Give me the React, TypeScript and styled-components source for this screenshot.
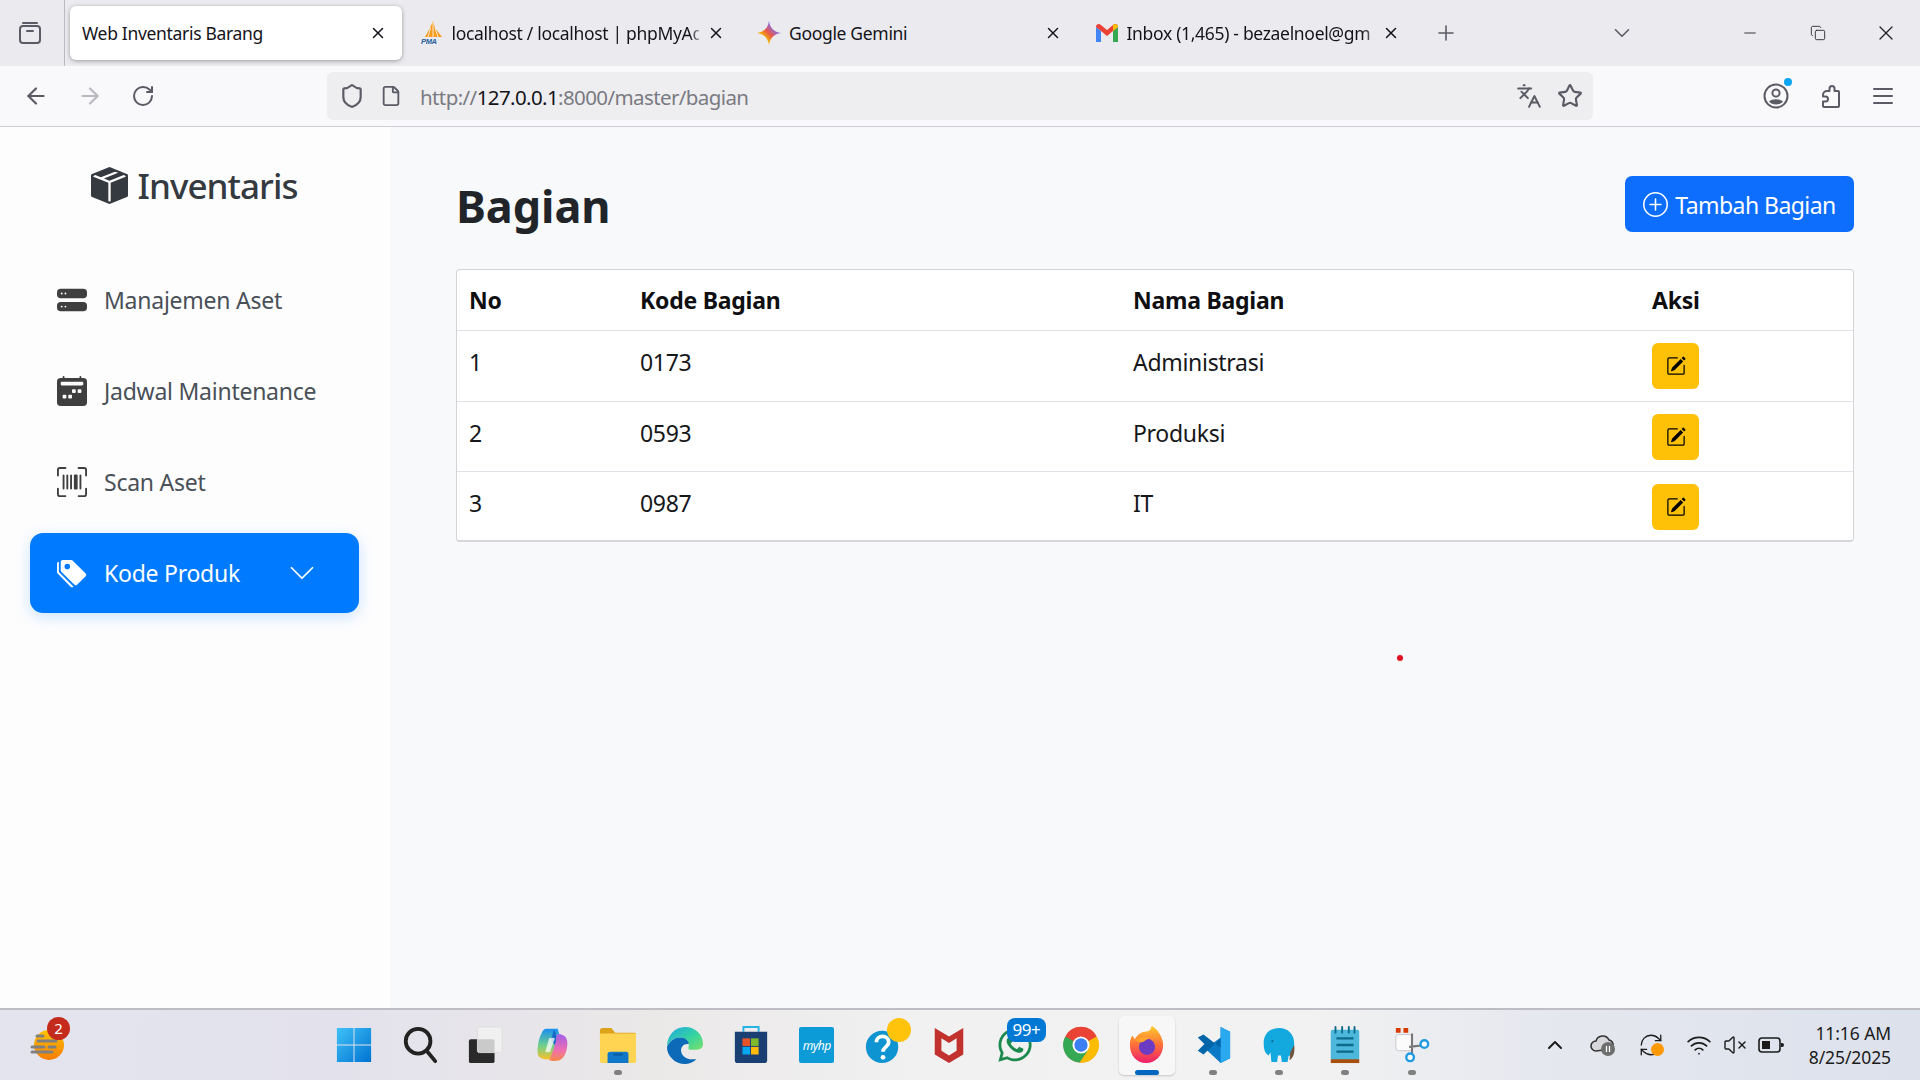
import React from "react";
import styled, { createGlobalStyle } from "styled-components";
import {
  ArrowLeft,
  ArrowRight,
  RotateCw,
  Shield,
  File,
  Star,
  Languages,
  X,
  Plus,
  ChevronDown,
  ChevronUp,
  Minus,
  Copy,
  VolumeX,
  Wifi,
  RefreshCw,
} from "lucide-react";
import {
  BsBoxSeamFill,
  BsHddStackFill,
  BsCalendar2WeekFill,
  BsUpcScan,
  BsTagsFill,
  BsChevronDown,
  BsPlusCircle,
  BsPencilSquare,
} from "react-icons/bs";
import { FaWhatsapp } from "react-icons/fa";

const FONT = `"Noto Sans", "Open Sans", "Liberation Sans", sans-serif`;

const GlobalStyle = createGlobalStyle`
  html, body {
    margin: 0;
    padding: 0;
    width: 1920px;
    height: 1080px;
    overflow: hidden;
    font-family: ${FONT};
    background: #f8f9fa;
  }
  * { box-sizing: border-box; }
`;

const Screen = styled.div`
  position: relative;
  width: 1920px;
  height: 1080px;
  display: flex;
  flex-direction: column;
`;

/* browser tab strip */
const TabStrip = styled.div`
  height: 66px;
  flex: none;
  display: flex;
  align-items: flex-start;
  background: #ebebef;
  color: #15141a;
`;

const TabListSlot = styled.div`
  width: 65px;
  height: 66px;
  flex: none;
  padding-right: 5px;
  display: flex;
  align-items: center;
  justify-content: center;
  border-right: 1px solid #b9b9bf;
  margin-right: 5px;
`;

const Tab = styled.div<{ $active?: boolean }>`
  width: 332px;
  height: 54px;
  margin: 6px 5.5px 0 0;
  flex: none;
  display: flex;
  align-items: center;
  padding: 0 15px 0 12px;
  border-radius: 6px;
  gap: 8px;
  font-size: 17.5px;
  letter-spacing: -0.32px;
  background: ${(p) => (p.$active ? "#ffffff" : "transparent")};
  box-shadow: ${(p) => (p.$active ? "0 1px 4px rgba(0,0,0,.35)" : "none")};
`;

const TabTitle = styled.span<{ $fade?: boolean }>`
  flex: 1;
  min-width: 0;
  white-space: nowrap;
  ${(p) =>
    p.$fade &&
    `-webkit-mask-image: linear-gradient(90deg,#000 96%,rgba(0,0,0,.4));mask-image: linear-gradient(90deg,#000 96%,rgba(0,0,0,.4));`}
`;

const TabFavicon = styled.svg`
  width: 24px;
  height: 24px;
  flex: none;
`;

const StripControls = styled.div`
  flex: 1;
  height: 66px;
  display: flex;
  align-items: center;
  color: #5b5b66;
`;

const PlusSlot = styled.div`
  width: 60px;
  margin-left: -4px;
  display: flex;
  justify-content: center;
`;

const ChevronSlot = styled.div`
  margin-left: 131px;
  width: 30px;
  display: flex;
  justify-content: center;
`;

const WindowButtons = styled.div`
  margin-left: auto;
  display: flex;
  align-items: center;
  color: #222;
`;

const WindowButton = styled.div`
  width: 68px;
  display: flex;
  justify-content: center;
`;

/* browser toolbar */
const Toolbar = styled.div`
  height: 61px;
  flex: none;
  display: flex;
  align-items: center;
  background: #f9f9fb;
  border-bottom: 1px solid #cfcfd8;
  color: #5b5b66;
  padding-left: 13px;
`;

const NavButton = styled.div<{ $dim?: boolean }>`
  width: 54px;
  display: flex;
  justify-content: flex-start;
  padding-left: 10px;
  opacity: ${(p) => (p.$dim ? 0.4 : 1)};
`;

const UrlBar = styled.div`
  width: 1266px;
  height: 48px;
  margin-left: 152px;
  border-radius: 6px;
  background: #eeeef0;
  display: flex;
  align-items: center;
  padding: 0 10px 0 12px;
  gap: 15px;
`;

const UrlText = styled.div`
  flex: 1;
  font-size: 20.5px;
  letter-spacing: -0.6px;
  color: #7a7a82;
  white-space: nowrap;
  margin: 1px 0 0 3px;
  b {
    font-weight: 400;
    color: #15141a;
  }
`;

const ToolbarRight = styled.div`
  margin-left: auto;
  display: flex;
  align-items: center;
  gap: 28px;
  padding-right: 24px;
`;

const AccountIcon = styled.div`
  position: relative;
  width: 26px;
  height: 26px;
  margin-right: -1px;
  &::after {
    content: "";
    position: absolute;
    top: -5px;
    right: -3px;
    width: 8px;
    height: 8px;
    border-radius: 50%;
    background: #0aa5f5;
  }
`;

/* page */
const Body = styled.div`
  flex: 1;
  min-height: 0;
  display: flex;
`;

const Sidebar = styled.aside`
  width: 390px;
  flex: none;
  background: #fdfdfe;
  padding: 33px 31px 0 30px;
  color: #3a3a3a;
`;

const Brand = styled.div`
  display: flex;
  align-items: center;
  justify-content: center;
  gap: 9px;
  height: 50px;
  font-size: 35px;
  font-weight: 500;
  letter-spacing: -0.95px;
  color: #343a40;
  margin-bottom: 50px;
  svg {
    width: 37px;
    height: 37px;
  }
`;

const NavList = styled.nav`
  display: flex;
  flex-direction: column;
  gap: 11px;
`;

const NavItem = styled.div<{ $active?: boolean }>`
  height: 80px;
  border-radius: 13px;
  display: flex;
  align-items: center;
  padding-left: 27px;
  gap: 17px;
  font-size: 23px;
  letter-spacing: -0.25px;
  color: ${(p) => (p.$active ? "#fff" : "#495057")};
  background: ${(p) => (p.$active ? "#007bff" : "transparent")};
  box-shadow: ${(p) => (p.$active ? "0 4px 15px rgba(0,123,255,.2)" : "none")};
  > svg:first-child {
    width: 30px;
    height: 30px;
    flex: none;
    color: ${(p) => (p.$active ? "#fff" : "#3f3f3f")};
  }
`;

const NavCaret = styled.span`
  margin-left: 31px;
  display: flex;
  svg {
    width: 28px;
    height: 28px;
  }
`;

const Main = styled.main`
  position: relative;
  flex: 1;
  background: #f8f9fa;
  padding: 49px 66px 0 66px;
`;

const PageHeader = styled.div`
  display: flex;
  justify-content: space-between;
  align-items: flex-start;
  margin-bottom: 37px;
`;

const PageTitle = styled.h1`
  margin: 0;
  font-size: 45px;
  line-height: 60px;
  font-weight: 700;
  letter-spacing: -0.1px;
  color: #212529;
  height: 56px;
`;

const AddButton = styled.button`
  height: 56px;
  width: 229px;
  border: 0;
  border-radius: 7px;
  background: #0d6efd;
  color: #fff;
  display: flex;
  align-items: center;
  justify-content: center;
  gap: 7px;
  padding: 1px 0 0;
  font-family: inherit;
  font-size: 23px;
  letter-spacing: -0.55px;
  svg {
    width: 25px;
    height: 25px;
  }
`;

const TableCard = styled.div`
  background: #fff;
  border: 1px solid #d4d4d6;
  border-bottom: 2px solid #d6d6da;
  border-radius: 4px;
  overflow: hidden;
`;

const DataTable = styled.table`
  width: 100%;
  border-collapse: collapse;
  table-layout: fixed;
  font-size: 23px;
  color: #212529;
  tbody tr:nth-child(1) td {
    height: 71px;
  }
  tbody tr:nth-child(2) td {
    height: 70px;
  }
  tbody tr:nth-child(3) td {
    height: 69px;
  }
`;

const Th = styled.th<{ $w?: number }>`
  width: ${(p) => (p.$w ? `${p.$w}px` : "auto")};
  height: 60px;
  text-align: left;
  font-weight: 700;
  padding: 1px 12px 0;
  letter-spacing: -0.25px;
  color: #0f0f12;
  border-bottom: 1px solid #dee2e6;
`;

const Td = styled.td<{ $action?: boolean }>`
  padding: ${(p) => (p.$action ? "12px" : "16px")} 12px 0;
  vertical-align: top;
  letter-spacing: -0.3px;
  line-height: 30px;
  border-top: 1px solid #dee2e6;
  color: #15171a;
`;

const EditButton = styled.button`
  width: 47px;
  height: 46px;
  border: 0;
  border-radius: 6px;
  background: #ffc107;
  color: #000;
  display: flex;
  align-items: center;
  justify-content: center;
  svg {
    width: 20px;
    height: 20px;
  }
`;

const Dot = styled.div`
  position: absolute;
  left: 1007px;
  top: 528px;
  width: 6px;
  height: 6px;
  border-radius: 50%;
  background: #e01020;
`;

/* windows taskbar */
const Taskbar = styled.footer`
  height: 72px;
  flex: none;
  display: flex;
  align-items: center;
  border-top: 2px solid #bdbdc3;
  background: linear-gradient(
    90deg,
    #e3e4ee 0%,
    #e3e2ec 18%,
    #ebe8e8 34%,
    #f1f1f1 48%,
    #f2f2f2 68%,
    #e6e8ef 80%,
    #dce1ec 100%
  );
`;

const WeatherSlot = styled.div`
  position: relative;
  width: 321px;
  flex: none;
  padding-left: 29px;
  display: flex;
  align-items: center;
`;

const CountBadge = styled.span`
  position: absolute;
  left: 47px;
  top: -10px;
  width: 23px;
  height: 23px;
  border-radius: 50%;
  background: #c42b1c;
  color: #fff;
  font-size: 15px;
  line-height: 23px;
  text-align: center;
`;

const IconGroup = styled.div`
  display: flex;
  align-items: center;
`;

const Slot = styled.div<{ $active?: boolean }>`
  position: relative;
  width: 66.1px;
  height: 70px;
  display: flex;
  align-items: center;
  justify-content: center;
  svg.tile {
    width: 38px;
    height: 38px;
  }
  ${(p) =>
    p.$active &&
    `&::before {
      content: "";
      position: absolute;
      inset: 6px 5px 5px;
      border-radius: 5px;
      background: #f7f7f7;
      box-shadow: 0 1px 2px rgba(0,0,0,.18);
    }
    > * { position: relative; }`}
`;

const RunDot = styled.span<{ $active?: boolean }>`
  position: absolute !important;
  bottom: 5px;
  left: 50%;
  transform: translateX(-50%);
  width: ${(p) => (p.$active ? 24 : 8)}px;
  height: 5px;
  border-radius: 3px;
  background: ${(p) => (p.$active ? "#0067c0" : "#808080")};
`;

const YellowDot = styled.span`
  position: absolute;
  top: 8px;
  left: 37px;
  width: 24px;
  height: 24px;
  border-radius: 50%;
  background: #ffc30b;
`;

const ChatBadge = styled.span`
  position: absolute;
  top: 8px;
  left: 25px;
  width: 39px;
  height: 24px;
  border-radius: 8px;
  background: #0078d4;
  color: #fff;
  font-size: 17px;
  line-height: 24px;
  text-align: center;
  letter-spacing: -0.5px;
`;

const Tray = styled.div`
  margin-left: auto;
  display: flex;
  align-items: center;
  color: #1c1c1c;
  padding-right: 29px;
`;

const TrayIcon = styled.div<{ $w: number }>`
  position: relative;
  width: ${(p) => p.$w}px;
  display: flex;
  justify-content: center;
`;

const TrayClock = styled.div`
  margin-left: 14px;
  text-align: right;
  font-size: 17.5px;
  line-height: 24px;
  color: #1b1b1b;
  letter-spacing: -0.1px;
`;

const OrangeDot = styled.span`
  position: absolute;
  left: 24px;
  top: 11px;
  width: 13px;
  height: 13px;
  border-radius: 50%;
  background: #ff9a05;
`;

/* drawings */
const TabsIcon = () => (
  <svg width="24" height="24" viewBox="0 0 24 24" fill="none" stroke="#5b5b66" strokeWidth="2">
    <rect x="2" y="5" width="20" height="17" rx="3" />
    <path d="M5 2h14M9 10h6" strokeLinecap="round" />
  </svg>
);

const PmaIcon = () => (
  <TabFavicon viewBox="0 0 24 24">
    <path d="M13 0l2 7 7 9H5l5-9z" fill="#f59b1e" />
    <path d="M13 1v15M10.5 7L8 16M15 7l3 9" stroke="#fff" strokeWidth=".8" />
    <text x="1" y="23" fontFamily="Liberation Sans, sans-serif" fontSize="7.5" fontWeight="700" fontStyle="italic" fill="#2a5d9c">
      PMA
    </text>
  </TabFavicon>
);

const GeminiIcon = () => (
  <TabFavicon viewBox="0 0 24 24">
    <defs>
      <linearGradient id="gem1" x1="0" y1="1" x2="1" y2="0">
        <stop offset="0" stopColor="#34a853" />
        <stop offset=".3" stopColor="#f4b400" />
        <stop offset=".5" stopColor="#e9584c" />
        <stop offset=".7" stopColor="#8e6bd8" />
        <stop offset="1" stopColor="#2f8cf2" />
      </linearGradient>
    </defs>
    <path d="M12 0c1 7 5 11 12 12-7 1-11 5-12 12-1-7-5-11-12-12 7-1 11-5 12-12z" fill="url(#gem1)" />
  </TabFavicon>
);

const GmailIcon = () => (
  <TabFavicon viewBox="0 0 24 24">
    <path d="M1 6v15h5V10z" fill="#4285f4" />
    <path d="M23 6v15h-5V10z" fill="#34a853" />
    <path d="M1 6c0-3 3-4 5-2l6 5 6-5c2-2 5-1 5 2l-5 4-6 5-6-5z" fill="#ea4335" />
    <path d="M18 3.8c2-1.6 5-.8 5 2.2l-5 4z" fill="#fbbc04" />
  </TabFavicon>
);

const AccountGlyph = () => (
  <svg width="26" height="26" viewBox="0 0 26 26" fill="none">
    <circle cx="13" cy="13" r="11.5" stroke="#5b5b66" strokeWidth="2" />
    <circle cx="13" cy="10" r="3.6" stroke="#5b5b66" strokeWidth="2" />
    <path d="M6 18.5c3-3 11-3 14 0-3 4-11 4-14 0z" fill="#5b5b66" />
  </svg>
);

const ExtensionGlyph = () => (
  <svg width="26" height="26" viewBox="0 0 26 26" fill="none" stroke="#5b5b66" strokeWidth="2" strokeLinejoin="round">
    <path d="M11 8h2.5V5.5a2.5 2.5 0 0 1 5 0V8H22a1 1 0 0 1 1 1v14a1 1 0 0 1-1 1H8a1 1 0 0 1-1-1v-4.5h2.5a2.5 2.5 0 0 0 0-5H7V12a4 4 0 0 1 4-4z" />
  </svg>
);

const MenuGlyph = () => (
  <svg width="26" height="26" viewBox="0 0 26 26" stroke="#5b5b66" strokeWidth="2" strokeLinecap="round">
    <path d="M4 6h18M4 13h18M4 20h18" />
  </svg>
);

const StartIcon = () => (
  <svg className="tile" viewBox="0 0 40 40">
    <defs>
      <linearGradient id="win" x1="0" y1="0" x2="1" y2="1">
        <stop offset="0" stopColor="#3fc1f7" />
        <stop offset="1" stopColor="#0073d1" />
      </linearGradient>
    </defs>
    <path d="M2 2h17.5v17.5H2zM20.5 2H38v17.5H20.5zM2 20.5h17.5V38H2zM20.5 20.5H38V38H20.5z" fill="url(#win)" />
  </svg>
);

const SearchIcon = () => (
  <svg className="tile" viewBox="0 0 40 40" fill="none" stroke="#222" strokeWidth="4" strokeLinecap="round">
    <circle cx="18" cy="16" r="13" />
    <path d="M27 26l9 11" />
  </svg>
);

const TaskViewIcon = () => (
  <svg className="tile" viewBox="0 0 40 40">
    <rect x="2" y="14" width="27" height="25" rx="2" fill="#2a2a2a" />
    <rect x="11" y="1" width="26" height="27" rx="2" fill="#f2f2f2" fillOpacity=".8" stroke="#ddd" />
  </svg>
);

const CopilotIcon = () => (
  <svg className="tile" viewBox="0 0 40 40">
    <defs>
      <linearGradient id="cop1" x1="0" y1="0" x2="0" y2="1">
        <stop offset="0" stopColor="#1a8ff0" />
        <stop offset=".55" stopColor="#6fd08c" />
        <stop offset="1" stopColor="#f6c12a" />
      </linearGradient>
      <linearGradient id="cop2" x1="0" y1="0" x2="0" y2="1">
        <stop offset="0" stopColor="#a25ee8" />
        <stop offset=".6" stopColor="#ef6fb0" />
        <stop offset="1" stopColor="#f7894a" />
      </linearGradient>
    </defs>
    <path d="M14 3h12l3 10-9 20c-1 3-10 3-14-1-3-4 0-20 3-24 1-3 3-5 5-5z" fill="url(#cop1)" />
    <path d="M25 9c5-1 10 1 11 7 1 6-2 18-8 20-3 1-9 1-11 0l5-12z" fill="url(#cop2)" />
    <path d="M22 4c3 3 3 10 1 16l-4-5z" fill="#1668c9" />
    <path d="M17 13c3-1 5-1 6 0l-5 14c-2 1-4 1-5 0z" fill="#fff" fillOpacity=".75" />
  </svg>
);

const FolderIcon = () => (
  <svg className="tile" viewBox="0 0 40 40">
    <path d="M1 5c0-2 1-3 3-3h9l4 5h20c1 0 2 1 2 2v3H1z" fill="#dca21a" />
    <path d="M1 8h38v29c0 1-1 2-2 2H3c-1 0-2-1-2-2z" fill="#ffd452" />
    <path d="M9 39V30c0-2 1-3 3-3h17c1 0 2 1 2 3v9z" fill="#1177c9" />
    <rect x="15" y="29" width="10" height="2" fill="#0a5aa0" />
  </svg>
);

const EdgeIcon = () => (
  <svg className="tile" viewBox="0 0 40 40">
    <defs>
      <linearGradient id="edg" x1="0" y1="0" x2="1" y2="1">
        <stop offset="0" stopColor="#1ea7e6" />
        <stop offset=".55" stopColor="#35d3a0" />
        <stop offset="1" stopColor="#7ce06a" />
      </linearGradient>
    </defs>
    <path d="M20 1c11 0 19 8 19 18 0 3-2 6-7 6H25c-2 0-1-3-1-5 0-5-4-8-9-8C9 12 3 16 1 22 1 10 9 1 20 1z" fill="url(#edg)" />
    <path d="M1 22c3-7 9-10 14-10 5 0 9 3 9 7-5-1-9 3-8 8 1 5 6 8 11 8h5c-3 3-8 5-12 5C10 40 1 32 1 22z" fill="#0c6ab8" />
  </svg>
);

const StoreIcon = () => (
  <svg className="tile" viewBox="0 0 40 40">
    <path d="M12 6V1h16v5" fill="none" stroke="#27b3e6" strokeWidth="2" />
    <path d="M3 6h34v30c0 2-1 3-3 3H6c-2 0-3-1-3-3z" fill="#1a3f73" />
    <rect x="11" y="13" width="8" height="8" fill="#e8532a" />
    <rect x="20" y="13" width="8" height="8" fill="#7fba2c" />
    <rect x="11" y="22" width="8" height="8" fill="#05a6f0" />
    <rect x="20" y="22" width="8" height="8" fill="#ffba08" />
  </svg>
);

const MyHpTile = styled.div`
  width: 35px;
  height: 36px;
  border-radius: 2px;
  background: #0d9bd7;
  color: #fff;
  font-size: 12px;
  letter-spacing: -0.5px;
  display: flex;
  align-items: center;
  justify-content: center;
  font-style: italic;
`;

const HelpIcon = () => (
  <svg className="tile" viewBox="0 0 40 40">
    <circle cx="19" cy="22" r="17" fill="#0f94d2" />
    <path d="M13 17c0-8 13-8 13 0 0 5-6 5-6 10" fill="none" stroke="#fff" strokeWidth="4" />
    <circle cx="20" cy="33" r="2.5" fill="#fff" />
  </svg>
);

const McAfeeIcon = () => (
  <svg className="tile" viewBox="0 0 40 40">
    <path d="M5 2l15 9 15-9v28l-15 9-15-9z" fill="#c1312e" />
    <path d="M12 13l8 5 8-5v13l-8 5-8-5z" fill="#f1f1f1" />
  </svg>
);

const ChromeIcon = () => (
  <svg className="tile" viewBox="0 0 40 40">
    <circle cx="20" cy="20" r="18.5" fill="#ea4335" />
    <path d="M20 20l16.5-9a18.5 18.5 0 0 1-18 27.5z" fill="#fbbc04" />
    <path d="M20 20L3.5 11a18.5 18.5 0 0 0 15 27.5L27 26z" fill="#34a853" />
    <path d="M3.5 11A18.5 18.5 0 0 1 36.5 11H20z" fill="#ea4335" />
    <circle cx="20" cy="20" r="9" fill="#fff" />
    <circle cx="20" cy="20" r="7" fill="#3b7ff2" />
  </svg>
);

const FirefoxIcon = () => (
  <svg className="tile" viewBox="0 0 40 40">
    <defs>
      <linearGradient id="ff" x1="0" y1="0" x2="0" y2="1">
        <stop offset="0" stopColor="#ffcb2d" />
        <stop offset=".5" stopColor="#ff7139" />
        <stop offset="1" stopColor="#ec1f6d" />
      </linearGradient>
    </defs>
    <path d="M2 20c0-5 1-8 3-10l2 4c3-5 7-8 11-8 5 0 6-3 7-6 6 3 12 12 12 20 0 11-8 19-18 19S2 31 2 20z" fill="url(#ff)" />
    <circle cx="20" cy="22" r="8.5" fill="#6c3bc4" />
    <path d="M8 15c4-3 10-4 14-2l-5 3c-2 2-6 1-9-1z" fill="#ffa52b" />
  </svg>
);

const VsCodeIcon = () => (
  <svg className="tile" viewBox="0 0 40 40">
    <path d="M28 1l10 5v28l-10 5-16-15 16-12z" fill="#0a7ac7" />
    <path d="M28 1l10 5v28l-10 5z" fill="#2aa9f0" />
    <path d="M28 13L10 30l-6-4 7-7-7-7 6-3 18 14z" fill="#0065a9" />
  </svg>
);

const ElephantIcon = () => (
  <svg className="tile" viewBox="0 0 40 40">
    <path d="M20 2C9 2 3 10 4 20c0 6 2 9 5 11l2-3 1 10h6l1-7 3 0 1 7h6l1-6c5-3 6-8 6-14C36 9 30 2 20 2z" fill="#14a9de" />
    <path d="M36 20c1 8-1 14-5 16l1-9z" fill="#6f5540" />
    <circle cx="13" cy="16" r="1.2" fill="#0a6c90" />
  </svg>
);

const NotepadIcon = () => (
  <svg className="tile" viewBox="0 0 40 40">
    <rect x="5" y="4" width="30" height="32" rx="2" fill="#4db7dc" />
    <rect x="5" y="35" width="30" height="4" fill="#a84f10" />
    <path d="M11 13h18M11 20h18M11 27h18" stroke="#0d6a8a" strokeWidth="2.4" />
    <path d="M10 1v6M17 1v6M24 1v6M30 1v6" stroke="#0d6a8a" strokeWidth="2" strokeLinecap="round" />
  </svg>
);

const SnipIcon = () => (
  <svg className="tile" viewBox="0 0 40 40">
    <path d="M3 2h5v5H3zM11 2h5v5h-5z" fill="#d83b01" />
    <rect x="3" y="9" width="17" height="17" rx="3" fill="#fbfbfb" stroke="#c6c6ca" />
    <path d="M20 8v22M17 22l17-2" stroke="#777" strokeWidth="2.2" />
    <circle cx="33" cy="19" r="4" fill="#fff" stroke="#1f9ae0" strokeWidth="2.5" />
    <circle cx="18" cy="33" r="4" fill="#fff" stroke="#1f9ae0" strokeWidth="2.5" />
  </svg>
);

const WeatherIcon = () => (
  <svg width="36" height="36" viewBox="0 0 36 36">
    <defs>
      <linearGradient id="sun" x1="0" y1="0" x2="0" y2="1">
        <stop offset="0" stopColor="#ffc400" />
        <stop offset="1" stopColor="#f57c00" />
      </linearGradient>
    </defs>
    <circle cx="20" cy="18" r="15" fill="url(#sun)" />
    <path d="M8 9h6M9 14h18M3 20h12M20 20h6M3 25h20" stroke="#808080" strokeWidth="3" strokeLinecap="round" />
  </svg>
);

const CloudPaused = () => (
  <svg width="26" height="24" viewBox="0 0 26 24">
    <path d="M6 18a5 5 0 0 1 0-10 7 7 0 0 1 13-1 5 5 0 0 1 2 9z" fill="#d8d8dc" stroke="#333" strokeWidth="1.6" />
    <circle cx="18" cy="16" r="7" fill="#6e6e6e" />
    <path d="M16.5 13v6M19.5 13v6" stroke="#fff" strokeWidth="1.3" />
  </svg>
);

const BatteryIcon = () => (
  <svg width="26" height="20" viewBox="0 0 26 20" fill="none">
    <rect x="1" y="3" width="21" height="14" rx="3" stroke="#1c1c1c" strokeWidth="1.6" />
    <rect x="4" y="6" width="8" height="8" fill="#1c1c1c" />
    <path d="M23 8h1a2 2 0 0 1 0 4h-1z" fill="#1c1c1c" />
  </svg>
);

const rows = [
  { no: 1, kode: "0173", nama: "Administrasi" },
  { no: 2, kode: "0593", nama: "Produksi" },
  { no: 3, kode: "0987", nama: "IT" },
];

export default function App() {
  return (
    <Screen>
      <GlobalStyle />
      <TabStrip>
        <TabListSlot>
          <TabsIcon />
        </TabListSlot>
        <Tab $active>
          <TabTitle>Web Inventaris Barang</TabTitle>
          <X size={18} strokeWidth={2} />
        </Tab>
        <Tab>
          <PmaIcon />
          <TabTitle $fade>localhost / localhost | phpMyAd</TabTitle>
          <X size={18} strokeWidth={2} />
        </Tab>
        <Tab>
          <GeminiIcon />
          <TabTitle>Google Gemini</TabTitle>
          <X size={18} strokeWidth={2} />
        </Tab>
        <Tab>
          <GmailIcon />
          <TabTitle $fade>Inbox (1,465) - bezaelnoel@gm</TabTitle>
          <X size={18} strokeWidth={2} />
        </Tab>
        <StripControls>
          <PlusSlot>
            <Plus size={24} strokeWidth={1.6} />
          </PlusSlot>
          <ChevronSlot>
            <ChevronDown size={26} strokeWidth={1.5} />
          </ChevronSlot>
          <WindowButtons>
            <WindowButton>
              <Minus size={18} strokeWidth={1.2} />
            </WindowButton>
            <WindowButton>
              <Copy size={16} strokeWidth={1.3} />
            </WindowButton>
            <WindowButton>
              <X size={24} strokeWidth={1.3} />
            </WindowButton>
          </WindowButtons>
        </StripControls>
      </TabStrip>

      <Toolbar>
        <NavButton>
          <ArrowLeft size={26} strokeWidth={2} />
        </NavButton>
        <NavButton $dim>
          <ArrowRight size={26} strokeWidth={2} />
        </NavButton>
        <NavButton>
          <RotateCw size={24} strokeWidth={2} />
        </NavButton>
        <UrlBar>
          <Shield size={26} strokeWidth={2} />
          <File size={22} strokeWidth={2} />
          <UrlText>
            http://<b>127.0.0.1</b>:8000/master/bagian
          </UrlText>
          <Languages size={26} strokeWidth={1.8} />
          <Star size={26} strokeWidth={2} />
        </UrlBar>
        <ToolbarRight>
          <AccountIcon>
            <AccountGlyph />
          </AccountIcon>
          <ExtensionGlyph />
          <MenuGlyph />
        </ToolbarRight>
      </Toolbar>

      <Body>
        <Sidebar>
          <Brand>
            <BsBoxSeamFill />
            Inventaris
          </Brand>
          <NavList>
            <NavItem>
              <BsHddStackFill />
              Manajemen Aset
            </NavItem>
            <NavItem>
              <BsCalendar2WeekFill />
              Jadwal Maintenance
            </NavItem>
            <NavItem>
              <BsUpcScan />
              Scan Aset
            </NavItem>
            <NavItem $active>
              <BsTagsFill />
              Kode Produk
              <NavCaret>
                <BsChevronDown />
              </NavCaret>
            </NavItem>
          </NavList>
        </Sidebar>

        <Main>
          <PageHeader>
            <PageTitle>Bagian</PageTitle>
            <AddButton>
              <BsPlusCircle />
              Tambah Bagian
            </AddButton>
          </PageHeader>
          <TableCard>
            <DataTable>
              <thead>
                <tr>
                  <Th $w={171}>No</Th>
                  <Th $w={493}>Kode Bagian</Th>
                  <Th $w={519}>Nama Bagian</Th>
                  <Th>Aksi</Th>
                </tr>
              </thead>
              <tbody>
                {rows.map((r) => (
                  <tr key={r.no}>
                    <Td>{r.no}</Td>
                    <Td>{r.kode}</Td>
                    <Td>{r.nama}</Td>
                    <Td $action>
                      <EditButton>
                        <BsPencilSquare />
                      </EditButton>
                    </Td>
                  </tr>
                ))}
              </tbody>
            </DataTable>
          </TableCard>
          <Dot />
        </Main>
      </Body>

      <Taskbar>
        <WeatherSlot>
          <WeatherIcon />
          <CountBadge>2</CountBadge>
        </WeatherSlot>
        <IconGroup>
          <Slot>
            <StartIcon />
          </Slot>
          <Slot>
            <SearchIcon />
          </Slot>
          <Slot>
            <TaskViewIcon />
          </Slot>
          <Slot>
            <CopilotIcon />
          </Slot>
          <Slot>
            <FolderIcon />
            <RunDot />
          </Slot>
          <Slot>
            <EdgeIcon />
          </Slot>
          <Slot>
            <StoreIcon />
          </Slot>
          <Slot>
            <MyHpTile>myhp</MyHpTile>
          </Slot>
          <Slot>
            <HelpIcon />
            <YellowDot />
          </Slot>
          <Slot>
            <McAfeeIcon />
          </Slot>
          <Slot>
            <FaWhatsapp className="tile" color="#1c8a4e" />
            <ChatBadge>99+</ChatBadge>
          </Slot>
          <Slot>
            <ChromeIcon />
          </Slot>
          <Slot $active>
            <FirefoxIcon />
            <RunDot $active />
          </Slot>
          <Slot>
            <VsCodeIcon />
            <RunDot />
          </Slot>
          <Slot>
            <ElephantIcon />
            <RunDot />
          </Slot>
          <Slot>
            <NotepadIcon />
            <RunDot />
          </Slot>
          <Slot>
            <SnipIcon />
            <RunDot />
          </Slot>
        </IconGroup>
        <Tray>
          <TrayIcon $w={48}>
            <ChevronUp size={24} strokeWidth={2} />
          </TrayIcon>
          <TrayIcon $w={48}>
            <CloudPaused />
          </TrayIcon>
          <TrayIcon $w={48}>
            <RefreshCw size={26} strokeWidth={1.2} />
            <OrangeDot />
          </TrayIcon>
          <TrayIcon $w={48}>
            <Wifi size={26} strokeWidth={1.6} />
          </TrayIcon>
          <TrayIcon $w={24}>
            <VolumeX size={24} strokeWidth={1.4} />
          </TrayIcon>
          <TrayIcon $w={48}>
            <BatteryIcon />
          </TrayIcon>
          <TrayClock>
            11:16 AM
            <br />
            8/25/2025
          </TrayClock>
        </Tray>
      </Taskbar>
    </Screen>
  );
}
